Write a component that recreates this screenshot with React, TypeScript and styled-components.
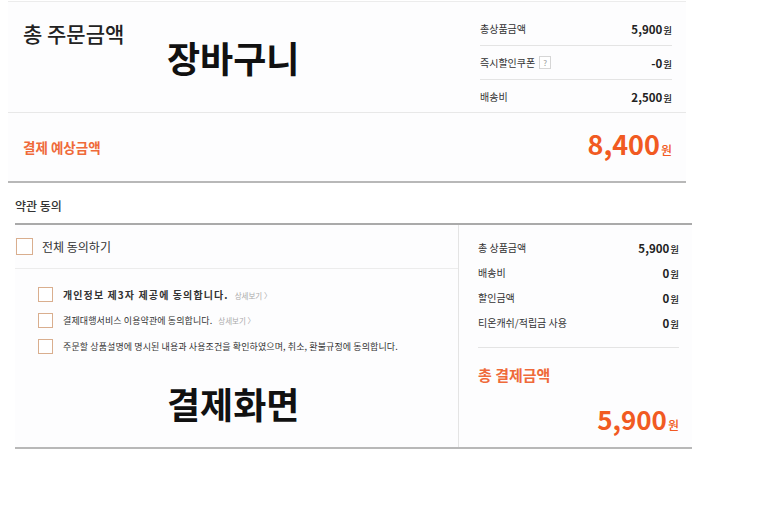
import React from 'react';
import styled, { createGlobalStyle } from 'styled-components';

const ORANGE = '#f15a22';

const GlobalStyle = createGlobalStyle`
    body {
        margin: 0;
        background: #ffffff;
        font-family: "Noto Sans CJK KR", "Noto Sans", sans-serif;
        color: #333;
    }
`;

const Page = styled.div`
    width: 780px;
    height: 514px;
    padding-top: 1px;
    box-sizing: border-box;
`;

const Cart = styled.section`
    margin-left: 8px;
    width: 678px;
    background: #fdfdfe;
    border-top: 1px solid #ececec;
    border-bottom: 2px solid #b8b8b8;
`;

const CartTop = styled.div`
    display: flex;
    height: 110px;
    border-bottom: 1px solid #e8e8e8;
`;

const CartLeft = styled.div`
    flex: 1;
    padding: 18px 0 0 15px;
`;

const OrderTitle = styled.h2`
    margin: 0;
    font-size: 21px;
    font-weight: 500;
    line-height: 26px;
    color: #222;
`;

const Caption = styled.div<{ $indent: number; $top: number }>`
    margin: ${p => p.$top}px 0 0 ${p => p.$indent}px;
    font-size: 36px;
    font-weight: 700;
    line-height: 40px;
    color: #111;
`;

const PriceList = styled.ul`
    list-style: none;
    margin: 10px 14px 0 0;
    padding: 0;
    width: 192px;
`;

const PriceRow = styled.li`
    display: flex;
    align-items: center;
    justify-content: space-between;
    height: 33px;
    & + & {
        border-top: 1px solid #e4e4e4;
    }
`;

const SmallLabel = styled.span`
    display: flex;
    align-items: center;
    gap: 4px;
    font-size: 10px;
    color: #333;
`;

const Help = styled.span`
    display: inline-flex;
    align-items: center;
    justify-content: center;
    width: 10px;
    height: 11px;
    border: 1px solid #d6d6d6;
    font-size: 8px;
    color: #999;
    background: #fff;
`;

const Amount = styled.span`
    font-size: 11.5px;
    font-weight: 700;
    color: #222;
`;

const Won = styled.span<{ $size: number }>`
    font-size: ${p => p.$size}px;
    font-weight: 500;
    margin-left: 1px;
`;

const ExpectRow = styled.div`
    display: flex;
    align-items: center;
    justify-content: space-between;
    height: 68px;
    padding: 0 14px 0 15px;
`;

const OrangeLabel = styled.span<{ $size: number }>`
    font-size: ${p => p.$size}px;
    font-weight: 700;
    color: #ef6a3a;
`;

const BigPrice = styled.span<{ $size: number }>`
    font-size: ${p => p.$size}px;
    font-weight: 700;
    color: ${ORANGE};
    line-height: 32px;
`;

const Terms = styled.section`
    margin-left: 15px;
    width: 677px;
`;

const TermsTitle = styled.h3`
    margin: 16px 0 0;
    padding-bottom: 10px;
    font-size: 12px;
    font-weight: 500;
    line-height: 14px;
    color: #333;
    border-bottom: 2px solid #aaaaaa;
`;

const TermsBody = styled.div`
    display: flex;
    height: 222px;
    background: #fdfdfe;
    border-bottom: 2px solid #b8b8b8;
`;

const AgreeColumn = styled.div`
    width: 443px;
    border-right: 1px solid #e4e4e4;
`;

const AllRow = styled.label`
    display: flex;
    align-items: center;
    gap: 9px;
    height: 43px;
    padding-left: 1px;
    border-bottom: 1px solid #ececec;
    font-size: 12px;
    color: #333;
`;

const Box = styled.span<{ $size: number }>`
    flex: none;
    width: ${p => p.$size - 2}px;
    height: ${p => p.$size - 2}px;
    border: 1px solid #d9ae8e;
    background: #fff;
`;

const AgreeList = styled.ul`
    list-style: none;
    margin: 0;
    padding: 12px 0 0 23px;
`;

const AgreeItem = styled.li<{ $strong?: boolean }>`
    display: flex;
    align-items: center;
    gap: 10px;
    height: 26px;
    font-size: ${p => (p.$strong ? '10px' : '9px')};
    font-weight: ${p => (p.$strong ? 700 : 400)};
    letter-spacing: ${p => (p.$strong ? '1.1px' : '0.1px')};
    color: #333;
`;

const More = styled.span`
    margin-left: 6px;
    font-size: 7.5px;
    font-weight: 400;
    letter-spacing: 0;
    color: #aaa;
`;

const PayColumn = styled.div`
    flex: 1;
    padding: 10px 13px 0 19px;
`;

const PayRow = styled.div`
    display: flex;
    align-items: center;
    justify-content: space-between;
    height: 25px;
`;

const PayDivider = styled.div`
    margin-top: 12px;
    border-top: 1px solid #e4e4e4;
`;

const PayTotalTitle = styled.div`
    margin-top: 17px;
    line-height: 18px;
`;

const PayTotal = styled.div`
    margin-top: 19px;
    text-align: right;
`;

const cartRows = [
    { label: '총상품금액', value: '5,900' },
    { label: '즉시할인쿠폰', value: '-0', help: true },
    { label: '배송비', value: '2,500' },
];

const payRows = [
    { label: '총 상품금액', value: '5,900' },
    { label: '배송비', value: '0' },
    { label: '할인금액', value: '0' },
    { label: '티온캐쉬/적립금 사용', value: '0' },
];

const App = () => {
    return (
        <Page>
            <GlobalStyle />
            <Cart>
                <CartTop>
                    <CartLeft>
                        <OrderTitle>총 주문금액</OrderTitle>
                        <Caption $indent={144} $top={-9}>장바구니</Caption>
                    </CartLeft>
                    <PriceList>
                        {cartRows.map(row => (
                            <PriceRow key={row.label}>
                                <SmallLabel>
                                    {row.label}
                                    {row.help && <Help>?</Help>}
                                </SmallLabel>
                                <Amount>{row.value}<Won $size={9.5}>원</Won></Amount>
                            </PriceRow>
                        ))}
                    </PriceList>
                </CartTop>
                <ExpectRow>
                    <OrangeLabel $size={13.5}>결제 예상금액</OrangeLabel>
                    <BigPrice $size={27}>8,400<Won $size={12}>원</Won></BigPrice>
                </ExpectRow>
            </Cart>

            <Terms>
                <TermsTitle>약관 동의</TermsTitle>
                <TermsBody>
                    <AgreeColumn>
                        <AllRow>
                            <Box $size={17} />
                            전체 동의하기
                        </AllRow>
                        <AgreeList>
                            <AgreeItem $strong>
                                <Box $size={15} />
                                <span>개인정보 제3자 제공에 동의합니다.<More>상세보기 〉</More></span>
                            </AgreeItem>
                            <AgreeItem>
                                <Box $size={15} />
                                <span>결제대행서비스 이용약관에 동의합니다.<More>상세보기 〉</More></span>
                            </AgreeItem>
                            <AgreeItem>
                                <Box $size={15} />
                                <span>주문할 상품설명에 명시된 내용과 사용조건을 확인하였으며, 취소, 환불규정에 동의합니다.</span>
                            </AgreeItem>
                        </AgreeList>
                        <Caption $indent={152} $top={24}>결제화면</Caption>
                    </AgreeColumn>
                    <PayColumn>
                        {payRows.map(row => (
                            <PayRow key={row.label}>
                                <SmallLabel>{row.label}</SmallLabel>
                                <Amount>{row.value}<Won $size={9.5}>원</Won></Amount>
                            </PayRow>
                        ))}
                        <PayDivider />
                        <PayTotalTitle>
                            <OrangeLabel $size={15}>총 결제금액</OrangeLabel>
                        </PayTotalTitle>
                        <PayTotal>
                            <BigPrice $size={26}>5,900<Won $size={12}>원</Won></BigPrice>
                        </PayTotal>
                    </PayColumn>
                </TermsBody>
            </Terms>
        </Page>
    );
};

export default App;
